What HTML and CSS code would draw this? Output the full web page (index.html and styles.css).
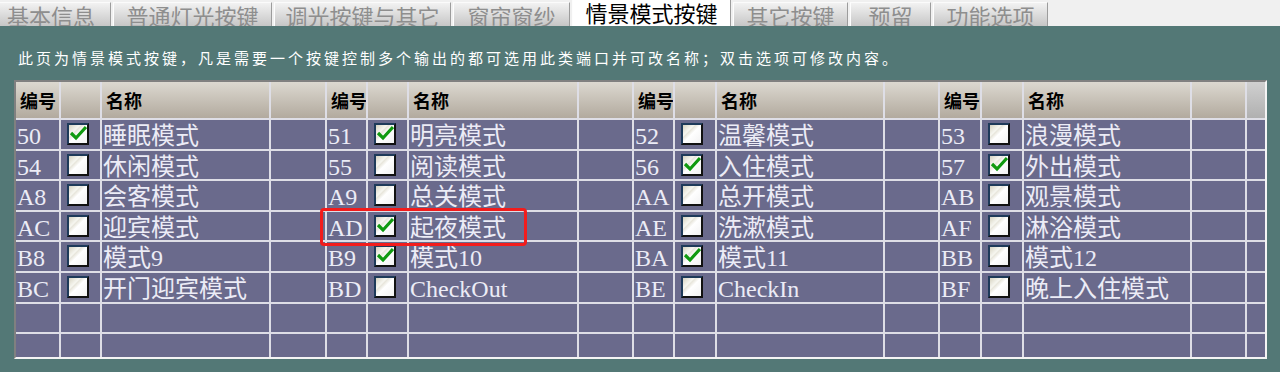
FILE: index.html
```html
<!DOCTYPE html>
<html lang="zh-CN">
<head>
  <meta charset="UTF-8">
  <title>情景模式按键</title>
  <link rel="stylesheet" href="styles.css">
</head>
<body>

  <div class="tabs">
    <div class="tab t1">基本信息</div>
    <div class="tab t2">普通灯光按键</div>
    <div class="tab t3">调光按键与其它</div>
    <div class="tab t4">窗帘窗纱</div>
    <div class="tab t5 active">情景模式按键</div>
    <div class="tab t6">其它按键</div>
    <div class="tab t7">预留</div>
    <div class="tab t8">功能选项</div>
  </div>

  <div class="panel">
    <p class="tip">此页为情景模式按键，凡是需要一个按键控制多个输出的都可选用此类端口并可改名称；双击选项可修改内容。</p>

    <div class="grid-wrap">
      <div class="grid" id="grid"></div>
      <div class="mark"></div>
    </div>
  </div>

  <script>
    const rows = [
      [["50", 1, "睡眠模式"], ["51", 1, "明亮模式"], ["52", 0, "温馨模式"], ["53", 0, "浪漫模式"]],
      [["54", 0, "休闲模式"], ["55", 0, "阅读模式"], ["56", 1, "入住模式"], ["57", 1, "外出模式"]],
      [["A8", 0, "会客模式"], ["A9", 0, "总关模式"], ["AA", 0, "总开模式"], ["AB", 0, "观景模式"]],
      [["AC", 0, "迎宾模式"], ["AD", 1, "起夜模式"], ["AE", 0, "洗漱模式"], ["AF", 0, "淋浴模式"]],
      [["B8", 0, "模式9"], ["B9", 1, "模式10"], ["BA", 1, "模式11"], ["BB", 0, "模式12"]],
      [["BC", 0, "开门迎宾模式"], ["BD", 0, "CheckOut"], ["BE", 0, "CheckIn"], ["BF", 0, "晚上入住模式"]],
      null,
      null
    ];

    const tick = '<svg width="18" height="18" viewBox="0 0 18 18"><polyline points="2,8 7,13 17,2" fill="none" stroke="#109a10" stroke-width="3.2"/></svg>';
    let html = "";

    // cabeçalho
    for (let g = 0; g < 4; g++) {
      html += '<div class="hd">编号</div><div class="hd"></div><div class="hd">名称</div><div class="hd"></div>';
    }
    html += '<div class="hd last"></div>';

    rows.forEach(r => {
      for (let g = 0; g < 4; g++) {
        if (r) {
          const c = r[g];
          html += `<div class="cell">${c[0]}</div>`;
          html += `<div class="cell chk"><span class="box">${c[1] ? tick : ""}</span></div>`;
          html += `<div class="cell">${c[2]}</div>`;
          html += '<div class="cell"></div>';
        } else {
          html += '<div class="cell"></div><div class="cell"></div><div class="cell"></div><div class="cell"></div>';
        }
      }
      html += '<div class="cell"></div>';
    });

    document.getElementById("grid").innerHTML = html;
  </script>

</body>
</html>
```

FILE: styles.css
```css
body {
  margin: 0;
  height: 372px;
  overflow: hidden;
  background: #537876;
  font-family: "Noto Sans CJK SC", sans-serif;
}

.tabs {
  display: flex;
  gap: 2px;
  height: 26px;
  background: #f0f0f0;
  overflow: hidden;
}

.tab {
  box-sizing: border-box;
  margin-top: 2px;
  height: 24px;
  padding-top: 1px;
  line-height: 22px;
  font-size: 22px;
  text-align: center;
  color: #8e8e8e;
  background: linear-gradient(#f2f2f2, #c6c6c6);
  border-top: 1px solid #fbfbfb;
  border-left: 1px solid #fdfdfd;
  border-right: 1px solid #9c9c9c;
  overflow: hidden;
  white-space: nowrap;
}

.tab.active {
  margin-top: 0;
  height: 26px;
  padding-top: 1px;
  color: #000;
  background: #fff;
  border-top: none;
}

.t1 { width: 120px; margin-left: -9px; }
.t2 { width: 159px; }
.t3 { width: 177px; }
.t4 { width: 117px; }
.t5 { width: 159px; }
.t6 { width: 115px; }
.t7 { width: 81px; }
.t8 { width: 115px; }

.panel {
  padding: 22px 0 0 14px;
}

.tip {
  margin: 0 0 12px 4px;
  height: 20px;
  line-height: 20px;
  font-size: 15px;
  letter-spacing: 3px;
  color: #fff;
  white-space: nowrap;
}

.grid-wrap {
  position: relative;
  width: 1253px;
  height: 279px;
  box-sizing: border-box;
  border-top: 2px solid #808080;
  border-left: 2px solid #808080;
  border-right: 2px solid #f4f4f4;
  border-bottom: 2px solid #f4f4f4;
  overflow: hidden;
}

.grid {
  display: grid;
  grid-template-columns: 43px 39px 167px 54px 39px 39px 168px 53px 39px 40px 166px 53px 40px 40px 166px 53px 18px;
  grid-template-rows: 36px;
  grid-auto-rows: 28.6px;
  gap: 2px;
  background: #dedee6;
}

.hd {
  display: flex;
  align-items: center;
  padding-left: 4px;
  font-size: 18px;
  font-weight: bold;
  color: #000;
  background: linear-gradient(#dcd8d0, #b2aa9e);
  white-space: nowrap;
  overflow: hidden;
}

.hd.last {
  background: linear-gradient(#d0d0d0, #b0b0b0);
}

.cell {
  box-sizing: border-box;
  padding: 4px 0 0 1px;
  line-height: 25px;
  font-size: 24px;
  font-family: "Liberation Serif", "Noto Sans CJK SC", serif;
  color: #ececf6;
  background: #6a6a8c;
  white-space: nowrap;
  overflow: hidden;
}

.cell.chk {
  padding: 3px 0 0 6px;
}

.box {
  display: block;
  box-sizing: border-box;
  width: 22px;
  height: 22px;
  border: 2px solid #111;
  border-top-color: #1e3a5a;
  border-left-color: #1e3a5a;
  background: linear-gradient(135deg, #d6d2c0 0%, #f6f6f0 30%, #e8e6dc 36%, #ffffff 50%, #f2f2f2 100%);
}

.box svg {
  display: block;
}

.mark {
  position: absolute;
  left: 304px;
  top: 126px;
  width: 207px;
  height: 38px;
  box-sizing: border-box;
  border: 3px solid #f21c1c;
  border-radius: 4px;
}
```
